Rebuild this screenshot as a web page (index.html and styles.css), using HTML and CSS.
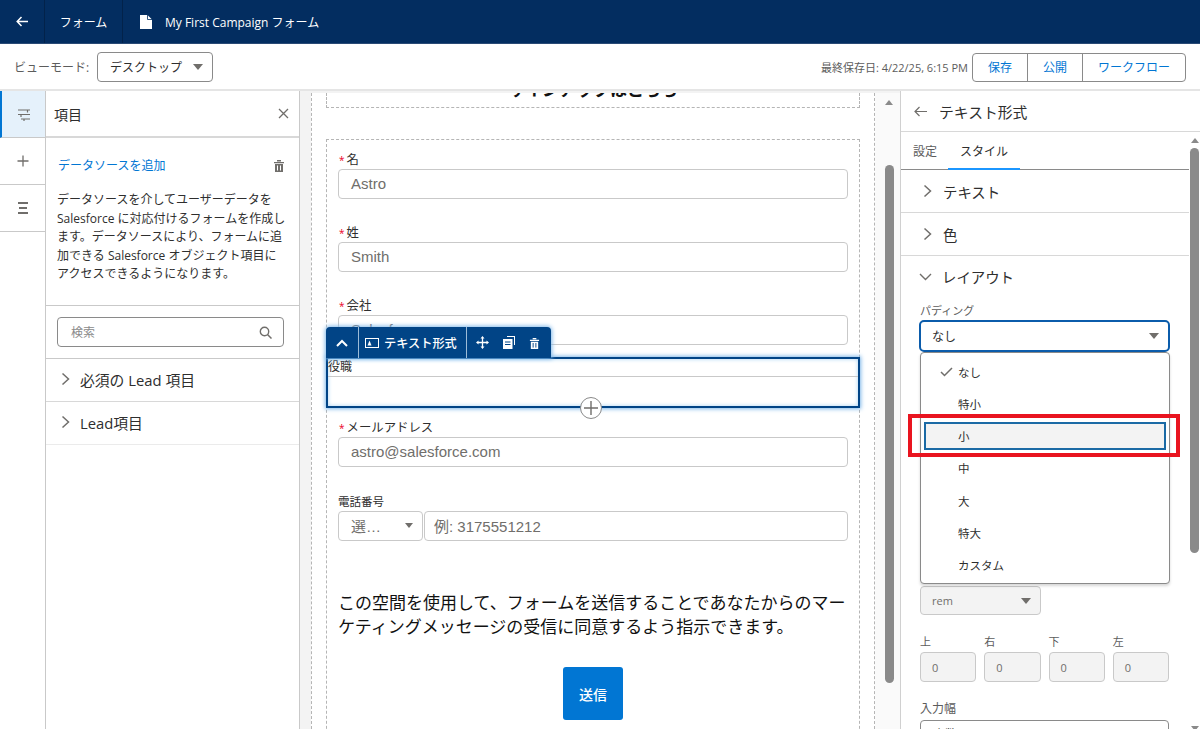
FILE: index.html
```html
<!DOCTYPE html>
<html lang="ja">
<head>
    <meta charset="UTF-8">
    <title>My First Campaign フォーム</title>
    <link rel="stylesheet" href="styles.css">
</head>
<body>
    <header class="topbar">
        <div class="top-back">
            <svg width="12" height="11" viewBox="0 0 12 11"><path d="M5.500 1 1.200 5.500 5.500 10M1.500 5.500H12" fill="none" stroke="#fff" stroke-width="1.500"/></svg>
        </div>
        <div class="top-item">フォーム</div>
        <div class="top-title">
            <svg width="12" height="14" viewBox="0 0 12 14"><path d="M0 0h7.500L12 4.500V14H0z" fill="#fff"/><path d="M7.500 0v4.500H12" fill="none" stroke="#032d60" stroke-width=".8"/></svg>
            <span>My First Campaign フォーム</span>
        </div>
    </header>

    <div class="toolbar">
        <span class="view-label">ビューモード:</span>
        <div class="view-select">デスクトップ<i class="caret"></i></div>
        <span class="saved">最終保存日: 4/22/25, 6:15 PM</span>
        <div class="btn-group">
            <div class="btn btn-save">保存</div>
            <div class="btn btn-save">公開</div>
            <div class="btn btn-flow">ワークフロー</div>
        </div>
    </div>

    <main class="main">
        <nav class="rail">
            <div class="rail-item active">
                <svg width="14" height="13" viewBox="0 0 14 13"><path d="M1 2h12M1 6.500h12M4 11h9M10.500 2v2.500M4 6.500V9M7 11v2" fill="none" stroke="#706e6b" stroke-width="1.200"/></svg>
            </div>
            <div class="rail-item">
                <svg width="12" height="12" viewBox="0 0 12 12"><path d="M6 .5v11M.5 6h11" stroke="#706e6b" stroke-width="1.300"/></svg>
            </div>
            <div class="rail-item">
                <svg width="12" height="14" viewBox="0 0 12 14"><path d="M1 2h10M2 7h8M1 12h10" stroke="#706e6b" stroke-width="2"/></svg>
            </div>
        </nav>

        <aside class="fields">
            <div class="fields-head">
                <span>項目</span>
                <svg width="11" height="11" viewBox="0 0 11 11"><path d="m1 1 9 9M10 1l-9 9" stroke="#706e6b" stroke-width="1.300"/></svg>
            </div>
            <section class="source">
                <div class="source-top">
                    <a class="source-link">データソースを追加</a>
                    <svg width="12" height="13" viewBox="0 0 12 13"><path d="M1 3h10v1.300H1zM4 1h4v1.500H4zM2 5h8v8H2z" fill="#706e6b"/><path d="M4.500 6.500v5M7.500 6.500v5" stroke="#fff"/></svg>
                </div>
                <p>データソースを介してユーザーデータを Salesforce に対応付けるフォームを作成します。データソースにより、フォームに追加できる Salesforce オブジェクト項目にアクセスできるようになります。</p>
            </section>
            <div class="search-wrap">
                <div class="search">
                    <span>検索</span>
                    <svg width="13" height="13" viewBox="0 0 13 13"><circle cx="5.500" cy="5.500" r="4.200" fill="none" stroke="#706e6b" stroke-width="1.400"/><path d="m8.500 8.500 4 4" stroke="#706e6b" stroke-width="1.500"/></svg>
                </div>
            </div>
            <div class="acc-row">
                <svg class="chev" width="9" height="14" viewBox="0 0 9 14"><path d="m1.500 1.500 6 5.500-6 5.500" fill="none" stroke="#706e6b" stroke-width="1.500"/></svg>
                必須の Lead 項目
            </div>
            <div class="acc-row last">
                <svg class="chev" width="9" height="14" viewBox="0 0 9 14"><path d="m1.500 1.500 6 5.500-6 5.500" fill="none" stroke="#706e6b" stroke-width="1.500"/></svg>
                Lead項目
            </div>
        </aside>

        <div class="canvas">
            <div class="page">
                <div class="block block-head"><h2>サインアップはこちら</h2></div>
                <div class="block block-form">
                    <div class="field">
                        <label><b>*</b>名</label>
                        <div class="input">Astro</div>
                    </div>
                    <div class="field">
                        <label><b>*</b>姓</label>
                        <div class="input">Smith</div>
                    </div>
                    <div class="field field-tight">
                        <label><b>*</b>会社</label>
                        <div class="input">Salesforce</div>
                    </div>
                    <div class="selected">
                        <div class="selected-label">役職</div>
                        <div class="selected-input"></div>
                        <div class="add-btn">
                            <svg width="14" height="14" viewBox="0 0 14 14"><path d="M7 0v14M0 7h14" stroke="#706e6b" stroke-width="1.400"/></svg>
                        </div>
                    </div>
                    <div class="field field-email">
                        <label><b>*</b>メールアドレス</label>
                        <div class="input">astro@salesforce.com</div>
                    </div>
                    <div class="field">
                        <label class="plain">電話番号</label>
                        <div class="phone">
                            <div class="input phone-code">選…<i class="caret caret-sm"></i></div>
                            <div class="input phone-num">例: 3175551212</div>
                        </div>
                    </div>
                    <p class="consent">この空間を使用して、フォームを送信することであなたからのマーケティングメッセージの受信に同意するよう指示できます。</p>
                    <div class="submit">送信</div>

                    <div class="float-bar">
                        <div class="float-cell float-up">
                            <svg width="12" height="8" viewBox="0 0 12 8"><path d="m1 7 5-5 5 5" fill="none" stroke="#fff" stroke-width="2"/></svg>
                        </div>
                        <div class="float-cell float-name">
                            <svg width="14" height="10" viewBox="0 0 14 10"><rect x=".5" y=".5" width="13" height="9" fill="none" stroke="#fff"/><path d="M2.500 7.500 4.500 2.500l2 5z" fill="#fff"/></svg>
                            テキスト形式
                        </div>
                        <div class="float-cell float-tools">
                            <svg width="13" height="13" viewBox="0 0 13 13"><path d="M6.500 0 8.500 2.500h-4zM6.500 13l-2-2.500h4zM0 6.500 2.500 4.500v4zM13 6.500l-2.500-2v4z" fill="#fff"/><path d="M6.500 2v9M2 6.500h9" stroke="#fff" stroke-width="1.300"/></svg>
                            <svg width="12" height="13" viewBox="0 0 12 13"><path d="M4 0h8v9h-1V1H4z" fill="#fff"/><path d="M0 3h9.500v10H0z" fill="#fff"/><path d="M2 6h5.500M2 8.500h5.500" stroke="#014486"/></svg>
                            <svg width="11" height="12" viewBox="0 0 12 13"><path d="M1 3h10v1.300H1zM4 1h4v1.500H4zM2 5h8v8H2z" fill="#fff"/><path d="M4.500 6.500v5M7.500 6.500v5" stroke="#014486"/></svg>
                        </div>
                    </div>
                </div>
            </div>
            <div class="canvas-scroll">
                <i class="arrow-up"></i>
                <div class="canvas-thumb"></div>
            </div>
        </div>

        <aside class="props">
            <div class="props-head">
                <svg width="13" height="11" viewBox="0 0 13 11"><path d="M5.500 1 1 5.500 5.500 10M1.500 5.500H13" fill="none" stroke="#706e6b" stroke-width="1.200"/></svg>
                <span>テキスト形式</span>
            </div>
            <div class="props-body">
                <div class="props-scroll">
                    <div class="tabs">
                        <div class="tab">設定</div>
                        <div class="tab tab-on">スタイル</div>
                    </div>
                    <div class="group">
                        <svg class="chev" width="9" height="14" viewBox="0 0 9 14"><path d="m1.500 1.500 6 5.500-6 5.500" fill="none" stroke="#706e6b" stroke-width="1.500"/></svg>
                        テキスト
                    </div>
                    <div class="group">
                        <svg class="chev" width="9" height="14" viewBox="0 0 9 14"><path d="m1.500 1.500 6 5.500-6 5.500" fill="none" stroke="#706e6b" stroke-width="1.500"/></svg>
                        色
                    </div>
                    <div class="group group-open">
                        <svg class="chev-down" width="13" height="8" viewBox="0 0 13 8"><path d="m1 1 5.500 5.500L12 1" fill="none" stroke="#706e6b" stroke-width="1.400"/></svg>
                        レイアウト
                    </div>
                    <div class="layout">
                        <div class="small-label">パディング</div>
                        <div class="pad-select">なし<i class="caret"></i></div>
                        <div class="rem-select">rem<i class="caret"></i></div>
                        <div class="sides">
                            <div class="side"><div class="small-label">上</div><div class="side-input">0</div></div>
                            <div class="side"><div class="small-label">右</div><div class="side-input">0</div></div>
                            <div class="side"><div class="small-label">下</div><div class="side-input">0</div></div>
                            <div class="side"><div class="small-label">左</div><div class="side-input">0</div></div>
                        </div>
                        <div class="small-label width-label">入力幅</div>
                        <div class="width-select">小数</div>

                        <ul class="menu">
                            <li>
                                <svg width="13" height="10" viewBox="0 0 13 10"><path d="m1 5 3.500 3.500L12 1" fill="none" stroke="#706e6b" stroke-width="1.500"/></svg>
                                なし
                            </li>
                            <li>特小</li>
                            <li class="menu-focus">小</li>
                            <li>中</li>
                            <li>大</li>
                            <li>特大</li>
                            <li>カスタム</li>
                        </ul>
                        <div class="callout"></div>
                    </div>
                </div>
                <div class="props-bar">
                    <i class="arrow-up"></i>
                    <div class="props-thumb"></div>
                    <i class="arrow-down"></i>
                </div>
            </div>
        </aside>
    </main>
</body>
</html>
```

FILE: styles.css
```css
* {
    box-sizing: border-box;
}

html, body {
    height: 100%;
}

body {
    margin: 0;
    overflow: hidden;
    background: #fff;
    color: #2e2e2e;
    font-family: "Open Sans", "Noto Sans CJK JP", sans-serif;
}

.caret {
    display: inline-block;
    width: 0;
    height: 0;
    border-left: 5px solid transparent;
    border-right: 5px solid transparent;
    border-top: 6px solid #706e6b;
}

.arrow-up {
    display: block;
    width: 0;
    height: 0;
    margin: 0 auto;
    border-left: 4px solid transparent;
    border-right: 4px solid transparent;
    border-bottom: 5px solid #8a8a8a;
}

.arrow-down {
    display: block;
    width: 0;
    height: 0;
    margin: 173px auto 0;
    border-left: 4px solid transparent;
    border-right: 4px solid transparent;
    border-top: 5px solid #8a8a8a;
}

/* top navy bar */
.topbar {
    height: 44px;
    display: flex;
    align-items: stretch;
    background: #032d60;
    border-bottom: 1px solid #2a4a75;
    color: #fff;
    font-size: 12px;
}

.top-back {
    width: 45px;
    display: flex;
    align-items: center;
    justify-content: center;
    border-right: 1px solid #02224a;
}

.top-item {
    width: 78px;
    display: flex;
    align-items: center;
    justify-content: center;
    border-right: 1px solid #02224a;
}

.top-title {
    display: flex;
    align-items: center;
    gap: 13px;
    padding-left: 17px;
}

/* view mode row */
.toolbar {
    height: 47px;
    display: flex;
    align-items: center;
    padding: 0 14px;
    border-bottom: 2px solid #e5e5e5;
}

.view-label {
    width: 83px;
    font-size: 12px;
    color: #5c5c5c;
}

.view-select {
    width: 116px;
    height: 30px;
    display: flex;
    align-items: center;
    justify-content: space-between;
    padding: 0 9px 0 12px;
    border: 1px solid #8a8a8a;
    border-radius: 4px;
    font-size: 12px;
}

.saved {
    margin-left: auto;
    margin-right: 4px;
    font-size: 11px;
    color: #5c5c5c;
}

.btn-group {
    display: flex;
    height: 29px;
    margin-top: 1px;
    border: 1px solid #8a8a8a;
    border-radius: 4px;
    color: #0176d3;
    font-size: 12px;
}

.btn {
    display: flex;
    align-items: center;
    justify-content: center;
}

.btn-save {
    width: 55px;
    border-right: 1px solid #8a8a8a;
}

.btn-flow {
    width: 102px;
}

.main {
    height: 638px;
    display: flex;
}

/* left icon rail */
.rail {
    width: 46px;
    border-right: 1px solid #c9c9c9;
}

.rail-item {
    height: 47px;
    display: flex;
    align-items: center;
    justify-content: center;
    border-bottom: 1px solid #c9c9c9;
}

.rail-item.active {
    background: #e5f1fb;
    border-left: 2px solid #0176d3;
}

/* fields panel */
.fields {
    width: 254px;
    border-right: 1px solid #c9c9c9;
}

.fields-head {
    height: 47px;
    display: flex;
    align-items: center;
    justify-content: space-between;
    padding: 0 10px 0 8px;
    border-bottom: 2px solid #d8d8d8;
    font-size: 14px;
}

.source {
    height: 168px;
    padding: 17px 11px 0;
    border-bottom: 1px solid #c9c9c9;
}

.source-top {
    display: flex;
    align-items: center;
    justify-content: space-between;
    height: 20px;
    padding: 0 3px 0 1px;
}

.source-link {
    color: #0176d3;
    font-size: 12px;
}

.source p {
    margin: 16px 0 0;
    font-size: 12px;
    line-height: 18.5px;
}

.search-wrap {
    height: 53px;
    padding: 11px 15px 0 11px;
    border-bottom: 1px solid #c9c9c9;
}

.search {
    height: 30px;
    display: flex;
    align-items: center;
    justify-content: space-between;
    padding: 0 11px 0 13px;
    border: 1px solid #8a8a8a;
    border-radius: 4px;
    font-size: 12px;
    color: #8a8a8a;
}

.acc-row {
    height: 43px;
    display: flex;
    align-items: center;
    gap: 10px;
    padding: 0 0 2px 15px;
    border-bottom: 1px solid #d8d8d8;
    font-size: 14.8px;
}

.acc-row.last {
    border-bottom-color: #ebebeb;
}

/* form canvas */
.canvas {
    width: 600px;
    display: flex;
    padding: 2px 0 0 11px;
    background: #f3f3f3;
}

.page {
    width: 564px;
    height: 100%;
    overflow: hidden;
    padding: 0 14px;
    background: #fff;
    border-left: 1px dashed #b5b5b5;
    border-right: 1px dashed #b5b5b5;
}

.block {
    border: 1px dashed #b5b5b5;
}

.block-head {
    height: 15px;
    margin-bottom: 31px;
    display: flex;
    justify-content: center;
    align-items: flex-end;
    overflow: hidden;
    border-top: 0;
}

.block-head h2 {
    flex: none;
    margin: 0 0 7px;
    font-size: 17px;
    line-height: 20px;
    font-weight: 700;
    color: #111;
    white-space: nowrap;
}

.block-form {
    position: relative;
    height: 640px;
    padding: 10px 11px 0;
    border-bottom: 0;
}

.field {
    margin-bottom: 24px;
}

.field-tight {
    margin-bottom: 12px;
}

.field-email {
    margin-bottom: 25px;
}

.field label {
    display: block;
    height: 19px;
    padding: 2px 0 0 1px;
    font-size: 12.4px;
    line-height: 16px;
}

.field label b {
    margin-right: 2px;
    color: #ea001e;
    font-size: 10px;
    font-weight: 400;
}

.field label.plain {
    font-size: 11.5px;
    padding-left: 0;
}

.input {
    height: 30px;
    display: flex;
    align-items: center;
    padding: 0 12px 2px;
    border: 1px solid #c9c9c9;
    border-radius: 4px;
    font-family: "Liberation Sans", "Noto Sans CJK JP", sans-serif;
    font-size: 15px;
    color: #706e6b;
}

.phone {
    display: flex;
    gap: 1px;
}

.phone-code {
    width: 85px;
    justify-content: space-between;
    padding-right: 9px;
}

.caret-sm {
    border-left-width: 4px;
    border-right-width: 4px;
    border-top-width: 5px;
}

.phone-num {
    flex: 1;
    padding-left: 9px;
}

/* the field being edited */
.selected {
    position: relative;
    height: 51px;
    margin: 0 -12px 10px;
    padding: 0;
    border: 2px solid #014486;
    box-shadow: 0 0 4px 1px #7fb8ea, inset 0 0 4px #a9d2f3;
    background: #fff;
}

.selected-label {
    height: 17px;
    font-size: 12px;
    line-height: 16px;
}

.selected-input {
    height: 1px;
    background: #c9c9c9;
}

.add-btn {
    position: absolute;
    left: 252px;
    top: 38px;
    width: 22px;
    height: 22px;
    display: flex;
    align-items: center;
    justify-content: center;
    background: #fff;
    border: 1px solid #8a8a8a;
    border-radius: 50%;
}

.float-bar {
    position: absolute;
    left: -1px;
    top: 187px;
    width: 225px;
    height: 31px;
    display: flex;
    background: #014486;
    border-radius: 4px 4px 0 0;
    box-shadow: 0 0 4px 1px #7fb8ea;
    color: #fff;
}

.float-cell {
    display: flex;
    align-items: center;
    border-right: 1px solid #9dbcd8;
}

.float-up {
    width: 33px;
    justify-content: center;
}

.float-name {
    width: 108px;
    gap: 5px;
    padding-left: 6px;
    font-size: 12.2px;
    font-weight: 500;
}

.float-tools {
    flex: 1;
    gap: 14px;
    padding-left: 9px;
    border-right: 0;
}

.consent {
    width: 512px;
    margin: 50px 0 0;
    font-size: 17px;
    line-height: 24px;
    color: #111;
}

.submit {
    width: 60px;
    height: 53px;
    margin: 28px auto 0;
    display: flex;
    align-items: center;
    justify-content: center;
    background: #0176d3;
    border-radius: 3px;
    color: #fff;
    font-size: 14px;
    font-weight: 500;
}

.canvas-scroll {
    width: 25px;
    padding: 7px 0 0 3px;
    background: #fafafa;
}

.canvas-thumb {
    width: 9px;
    height: 518px;
    margin: 60px auto 0;
    background: #8a8a8a;
    border-radius: 5px;
}

/* right properties panel */
.props {
    flex: 1;
    border-left: 1px solid #d0d0d0;
    overflow: hidden;
}

.props-head {
    height: 41px;
    display: flex;
    align-items: center;
    gap: 12px;
    padding-left: 13px;
    border-bottom: 1px solid #d8d8d8;
    font-size: 14.8px;
}

.props-body {
    display: flex;
    height: 597px;
}

.props-scroll {
    width: 288px;
    overflow: hidden;
}

.tabs {
    height: 38px;
    display: flex;
    padding-left: 12px;
    border-bottom: 1px solid #8a8a8a;
    font-size: 12px;
}

.tab {
    display: flex;
    align-items: center;
    color: #5c5c5c;
    padding-top: 1px;
}

.tab-on {
    width: 72px;
    margin-left: 11px;
    justify-content: center;
    color: #2e2e2e;
    border-bottom: 2px solid #1b96ff;
    height: 38px;
}

.group {
    height: 43px;
    display: flex;
    align-items: center;
    gap: 11px;
    padding-left: 22px;
    border-bottom: 1px solid #d8d8d8;
    font-size: 14.4px;
}

.group-open {
    height: 41px;
    padding-left: 18px;
    gap: 10px;
    border-bottom: 0;
}

.layout {
    position: relative;
    height: 460px;
    padding: 7px 19px 0;
}

.small-label {
    font-size: 11px;
    line-height: 14px;
    color: #5c5c5c;
}

.pad-select {
    width: 251px;
    height: 32px;
    margin: 2px 0 0 -1px;
    display: flex;
    align-items: center;
    justify-content: space-between;
    padding: 0 9px 0 11px;
    border: 2px solid #0b5cab;
    border-radius: 5px;
    font-size: 12px;
}

.rem-select {
    width: 121px;
    height: 29px;
    margin-top: 234px;
    display: flex;
    align-items: center;
    justify-content: space-between;
    padding: 0 9px 0 11px;
    background: #f3f3f3;
    border: 1px solid #c9c9c9;
    border-radius: 4px;
    font-size: 11px;
    color: #706e6b;
}

.sides {
    display: flex;
    gap: 8px;
    width: 249px;
    margin-top: 20px;
}

.side {
    flex: 1;
}

.side .small-label {
    margin-bottom: 3px;
}

.side-input {
    height: 30px;
    display: flex;
    align-items: center;
    padding-left: 11px;
    background: #f3f3f3;
    border: 1px solid #c9c9c9;
    border-radius: 4px;
    font-size: 11px;
    color: #706e6b;
}

.width-label {
    margin-top: 20px;
    font-size: 12px;
}

.width-select {
    width: 249px;
    height: 30px;
    margin-top: 4px;
    padding: 4px 12px;
    border: 1px solid #8a8a8a;
    border-radius: 4px;
    font-size: 12px;
}

/* open padding dropdown */
.menu {
    position: absolute;
    left: 19px;
    top: 55px;
    width: 250px;
    height: 232px;
    margin: 0;
    padding: 3px 3px 0;
    list-style: none;
    background: #fff;
    border: 1px solid #8a8a8a;
    border-radius: 4px;
    box-shadow: 0 2px 3px rgba(0, 0, 0, .16);
    font-size: 11.5px;
}

.menu li {
    position: relative;
    height: 32.2px;
    display: flex;
    align-items: center;
    padding-left: 34px;
}

.menu li svg {
    position: absolute;
    left: 16px;
    top: 11px;
}

.menu .menu-focus {
    height: 28px;
    margin: 2px 0;
    background: #f3f3f3;
    border: 2px solid #1b6aa5;
    padding-left: 32px;
}

/* red annotation box from the screenshot */
.callout {
    position: absolute;
    left: 7px;
    top: 117px;
    width: 272px;
    height: 43px;
    border: 4px solid #e9141f;
}

.props-bar {
    flex: 1;
    padding-top: 6px;
}

.props-thumb {
    width: 9px;
    height: 405px;
    margin: 5px auto 0;
    background: #8a8a8a;
    border-radius: 5px;
}
```
